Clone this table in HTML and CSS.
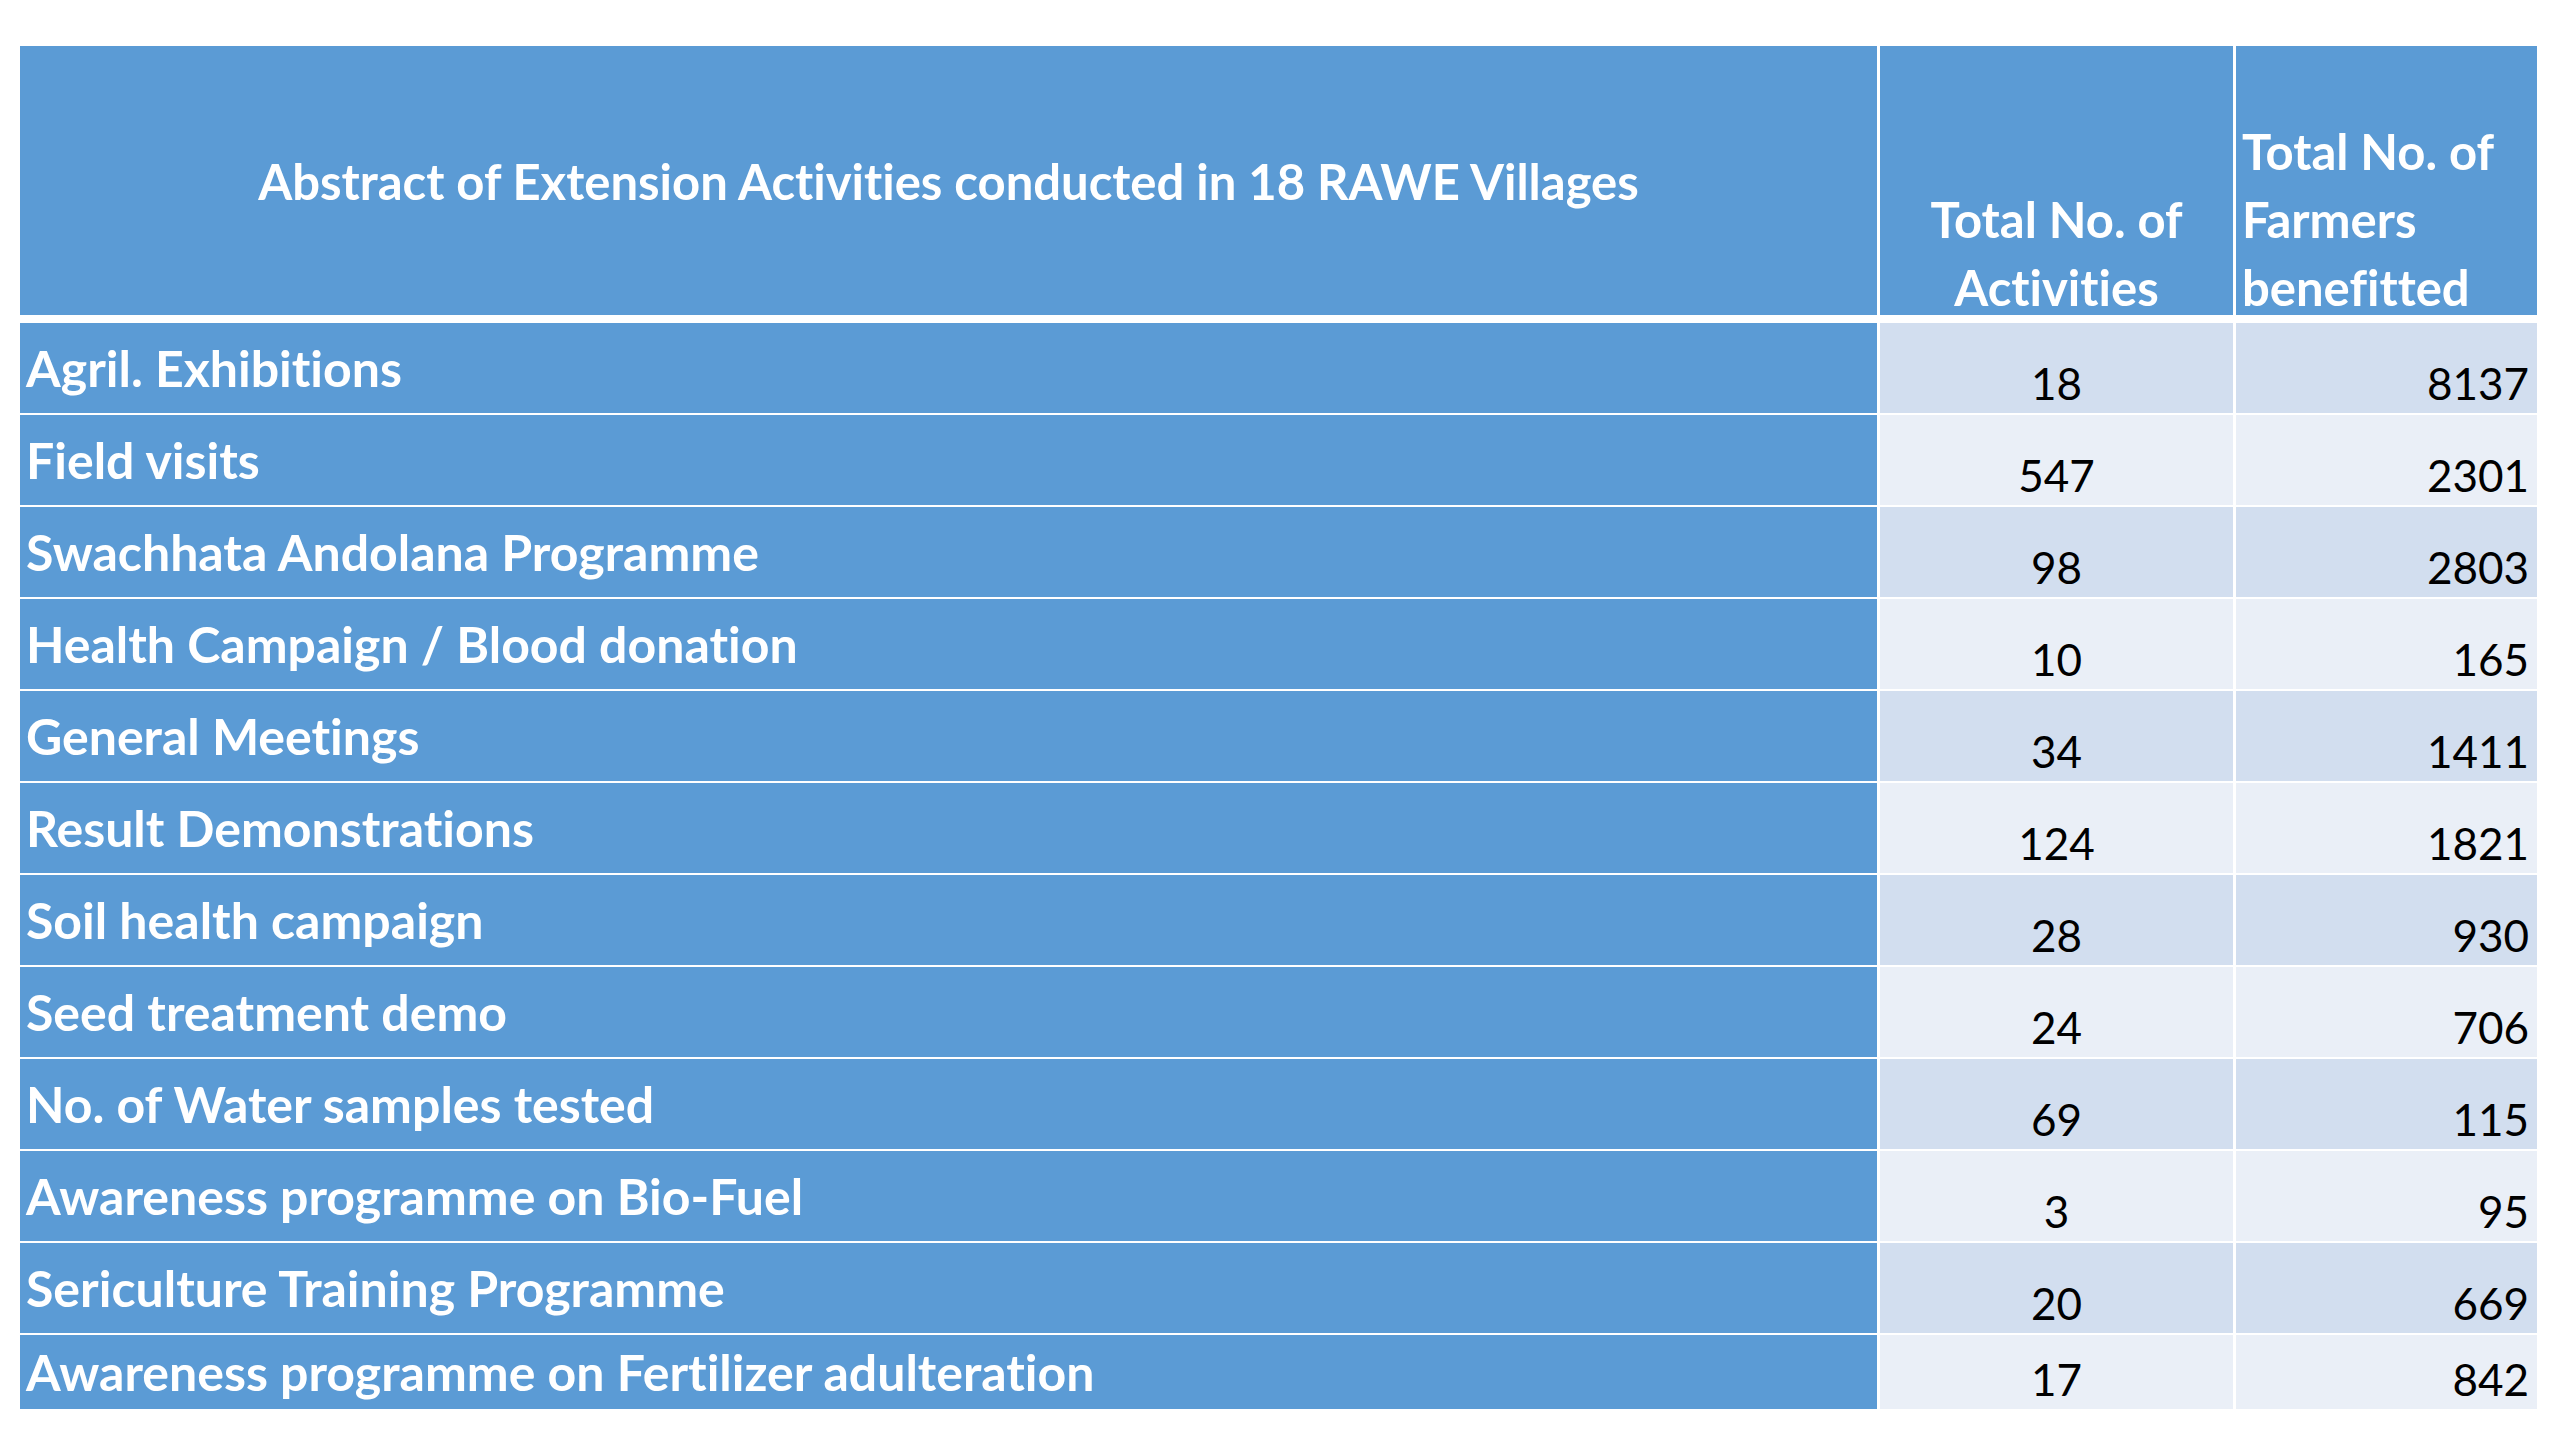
FILE: index.html
```html
<!DOCTYPE html>
<html lang="en">
<head>
<meta charset="utf-8">
<title>Abstract of Extension Activities</title>
<link rel="stylesheet" href="styles.css">
</head>
<body>
<div class="page">
  <div class="table">
    <div class="head">
      <div class="hcell title">Abstract of Extension Activities conducted in 18 RAWE Villages</div>
      <div class="hcell center"><span class="htext">Total No. of<br>Activities</span></div>
      <div class="hcell left"><span class="htext">Total No. of<br>Farmers<br>benefitted</span></div>
    </div>
    <div class="body">
      <div class="label">Agril. Exhibitions</div><div class="num c band1">18</div><div class="num r band1">8137</div>
      <div class="label">Field visits</div><div class="num c band2">547</div><div class="num r band2">2301</div>
      <div class="label">Swachhata Andolana Programme</div><div class="num c band1">98</div><div class="num r band1">2803</div>
      <div class="label">Health Campaign / Blood donation</div><div class="num c band2">10</div><div class="num r band2">165</div>
      <div class="label">General Meetings</div><div class="num c band1">34</div><div class="num r band1">1411</div>
      <div class="label">Result Demonstrations</div><div class="num c band2">124</div><div class="num r band2">1821</div>
      <div class="label">Soil health campaign</div><div class="num c band1">28</div><div class="num r band1">930</div>
      <div class="label">Seed treatment demo</div><div class="num c band2">24</div><div class="num r band2">706</div>
      <div class="label">No. of Water samples tested</div><div class="num c band1">69</div><div class="num r band1">115</div>
      <div class="label">Awareness programme on Bio-Fuel</div><div class="num c band2">3</div><div class="num r band2">95</div>
      <div class="label">Sericulture Training Programme</div><div class="num c band1">20</div><div class="num r band1">669</div>
      <div class="label">Awareness programme on Fertilizer adulteration</div><div class="num c band2">17</div><div class="num r band2">842</div>
    </div>
  </div>
</div>
</body>
</html>
```
FILE: styles.css
```css
html, body {
  margin: 0;
  padding: 0;
  background: #ffffff;
}

.page {
  padding: 46px 0 0 20px;
}

.table {
  width: 2517px;
  display: flex;
  flex-direction: column;
  gap: 8px;
  font-family: Lato, "Open Sans", sans-serif;
  font-variant-ligatures: none;
}

.head,
.body {
  display: grid;
  grid-template-columns: 1857px 353px 301px;
  column-gap: 3px;
  background: #ffffff;
}

.head {
  height: 269px;
}

.body {
  row-gap: 2px;
  grid-template-rows: repeat(11, 90px) 74px;
}

.hcell {
  background: #5b9bd5;
  color: #ffffff;
  font-weight: 700;
  font-size: 49px;
  line-height: 68px;
  display: flex;
  align-items: flex-end;
  overflow: hidden;
}

.htext {
  margin-bottom: -6px;
}

.hcell.title {
  align-items: center;
  justify-content: center;
  padding: 0;
}

.hcell.center {
  justify-content: center;
  text-align: center;
}

.hcell.left {
  justify-content: flex-start;
  text-align: left;
  padding-left: 6px;
}

.label {
  background: #5b9bd5;
  color: #ffffff;
  font-weight: 700;
  font-size: 50px;
  display: flex;
  align-items: center;
  padding-left: 6px;
  white-space: nowrap;
}

.num {
  color: #000000;
  font-size: 44px;
  line-height: 44px;
  display: flex;
  align-items: flex-end;
  padding-bottom: 8px;
  box-sizing: border-box;
}

.num.c {
  justify-content: center;
}

.num.r {
  justify-content: flex-end;
  padding-right: 8px;
}

.band1 {
  background: #d2deef;
}

.band2 {
  background: #eaeff7;
}
```
